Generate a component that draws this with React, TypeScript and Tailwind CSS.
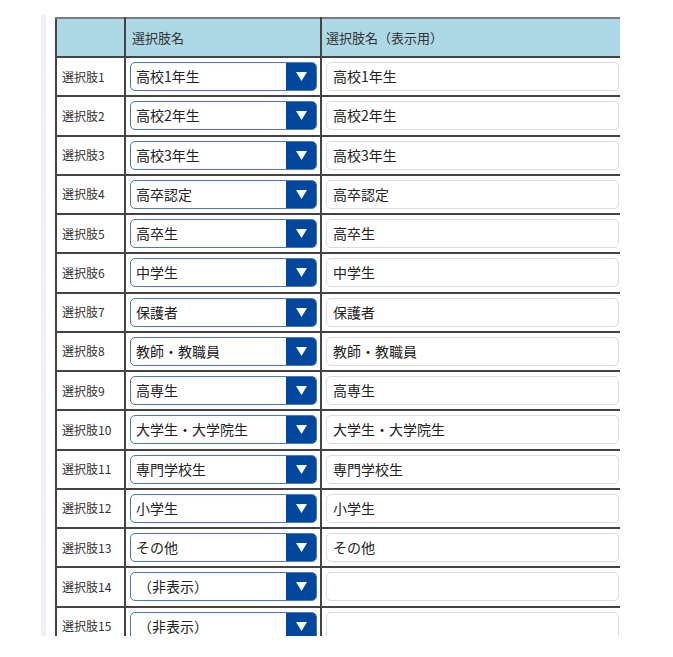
import React from "react";

const rows: { label: string; value: string }[] = [
  { label: "選択肢1", value: "高校1年生" },
  { label: "選択肢2", value: "高校2年生" },
  { label: "選択肢3", value: "高校3年生" },
  { label: "選択肢4", value: "高卒認定" },
  { label: "選択肢5", value: "高卒生" },
  { label: "選択肢6", value: "中学生" },
  { label: "選択肢7", value: "保護者" },
  { label: "選択肢8", value: "教師・教職員" },
  { label: "選択肢9", value: "高専生" },
  { label: "選択肢10", value: "大学生・大学院生" },
  { label: "選択肢11", value: "専門学校生" },
  { label: "選択肢12", value: "小学生" },
  { label: "選択肢13", value: "その他" },
  { label: "選択肢14", value: "" },
  { label: "選択肢15", value: "" },
];

function SelectBox({ value }: { value: string }) {
  return (
    <div className="flex h-[29px] w-[187px] overflow-hidden rounded-[5px] border border-[#4a78b8] bg-white">
      <div className="flex flex-1 items-center pl-[5px] text-[14px] text-[#222]">
        {value === "" ? <span className="pl-[2px]">（非表示）</span> : value}
      </div>
      <div className="flex w-[30px] items-center justify-center bg-[#00479d]">
        <svg width="11" height="9" viewBox="0 0 11 9">
          <path d="M0 0 H11 L5.5 9 Z" fill="#fff" />
        </svg>
      </div>
    </div>
  );
}

export default function App() {
  return (
    <div
      className="h-[657px] w-[673px] bg-white"
      style={{ fontFamily: '"Noto Sans CJK JP", "Noto Sans", sans-serif' }}
    >
      <div className="ml-[41px] flex h-[636px] pt-[14px]">
        <div className="w-[5px] bg-[#eef2f8]" />
        <div className="ml-[9px] mt-[3px] w-[565px] overflow-hidden">
          <table className="w-[565px] table-fixed border-collapse">
            <colgroup>
              <col className="w-[69px]" />
              <col className="w-[196px]" />
              <col className="w-[300px]" />
            </colgroup>
            <thead>
              <tr className="h-[39px] bg-[#add8e6]">
                <th className="border-2 border-[#444] border-t-[#7d7d7d] border-r-[#444]" />
                <th className="border-2 border-[#444] border-t-[#7d7d7d] pl-[6px] text-left text-[13px] font-normal text-[#333]">
                  選択肢名
                </th>
                <th className="border-2 border-r-0 border-[#444] border-t-[#7d7d7d] pl-[4px] text-left text-[13px] font-normal text-[#333]">
                  選択肢名（表示用）
                </th>
              </tr>
            </thead>
            <tbody>
              {rows.map((r) => (
                <tr key={r.label} className="h-[39.25px]">
                  <td className="border-2 border-[#444] pl-[5px] text-[12px] text-[#333]">
                    {r.label}
                  </td>
                  <td className="border-2 border-[#444] pl-[4px]">
                    <SelectBox value={r.value} />
                  </td>
                  <td className="border-2 border-r-0 border-[#444] pl-[4px]">
                    <div className="flex h-[29px] w-[293px] items-center rounded-[5px] border border-[#dcdcdc] bg-white pl-[6px] text-[14px] text-[#222]">
                      {r.value}
                    </div>
                  </td>
                </tr>
              ))}
            </tbody>
          </table>
        </div>
      </div>
    </div>
  );
}
